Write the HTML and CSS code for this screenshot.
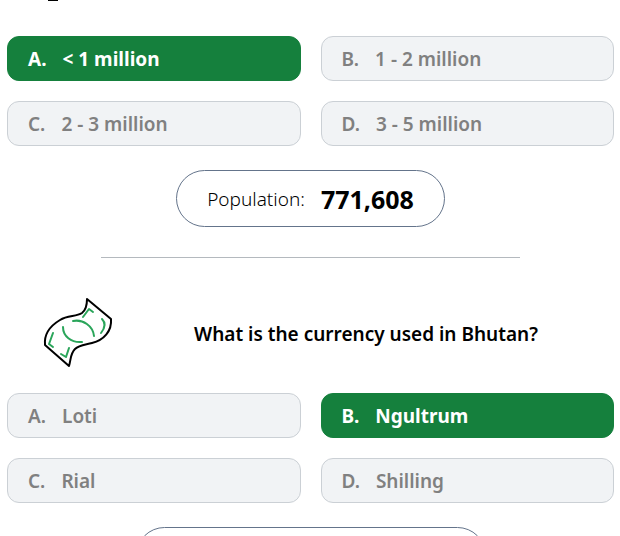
FILE: index.html
```html
<!DOCTYPE html>
<html lang="en">
<head>
  <meta charset="UTF-8">
  <meta name="viewport" content="width=device-width, initial-scale=1.0">
  <title>Bhutan</title>
  <link rel="stylesheet" href="styles.css">
</head>
<body>
  <main class="quiz">

    <section class="question">
      <div class="previous">
        <svg class="people-icon" viewBox="0 0 72 2" aria-hidden="true">
          <path d="M6 0h10v1H6z" fill="#000"/>
        </svg>
      </div>
      <div class="answers">
        <button class="answer correct" type="button"><span>A.</span><span>&lt; 1 million</span></button>
        <button class="answer" type="button" disabled><span>B.</span><span>1 - 2 million</span></button>
        <button class="answer" type="button" disabled><span>C.</span><span>2 - 3 million</span></button>
        <button class="answer" type="button" disabled><span>D.</span><span>3 - 5 million</span></button>
      </div>
      <p class="result"><span>Population:</span><strong>771,608</strong></p>
    </section>

    <hr class="divider">

    <section class="question">
      <div class="prompt">
        <svg class="money-icon" viewBox="0 0 72 72" fill="none" stroke-linecap="round" stroke-linejoin="round" aria-hidden="true">
          <path d="M45 2L69 22C70 34 62 43 50 46C42 48 37 48 33 52C28 57 29 63 27 69L3 48C2 38 8 29 18 23C26 18 34 20 40 16C44 13 45 8 45 2Z" stroke="#000" stroke-width="2"/>
          <path d="M41 20L47 12L51 15M60 22C64 26 63 31 59 36M11 36L7 47L11 50M19 57L24 60L27 51M31 24C41 22 51 29 52 39M21 30C21 39 29 46 40 45" stroke="#2aa55a" stroke-width="2"/>
        </svg>
        <h2>What is the currency used in Bhutan?</h2>
      </div>
      <div class="answers">
        <button class="answer" type="button" disabled><span>A.</span><span>Loti</span></button>
        <button class="answer correct" type="button"><span>B.</span><span>Ngultrum</span></button>
        <button class="answer" type="button" disabled><span>C.</span><span>Rial</span></button>
        <button class="answer" type="button" disabled><span>D.</span><span>Shilling</span></button>
      </div>
      <div class="result result-wide"></div>
    </section>

  </main>
</body>
</html>
```
FILE: styles.css
```css
* {
  box-sizing: border-box;
}

html {
  overflow: hidden;
}

body {
  margin: 0;
  height: 100vh;
  overflow: hidden;
  background: #fff;
  color: #000;
  font-family: "Noto Sans", "Open Sans", sans-serif;
}

.quiz {
  padding: 0 6px 0 7px;
}

.question {
  display: flex;
  flex-direction: column;
}

.previous {
  height: 36px;
  padding-left: 35px;
}

.people-icon {
  display: block;
  width: 72px;
}

.answers {
  display: grid;
  grid-template-columns: 1fr 1fr;
  gap: 20px;
}

.answer {
  display: flex;
  align-items: center;
  gap: 16px;
  padding: 10px 20px 8px;
  border: 1px solid #cbd0d5;
  border-radius: 12px;
  background: #f1f3f5;
  color: #808080;
  font-family: inherit;
  font-size: 19px;
  font-weight: 600;
  line-height: 25px;
  text-align: left;
}

.answer.correct {
  border-color: #15803d;
  background: #15803d;
  color: #fff;
  font-weight: 700;
}

.result {
  display: flex;
  align-items: center;
  align-self: center;
  gap: 16px;
  height: 57px;
  margin: 24px 0 0;
  padding: 0 30px;
  border: 1px solid #64748b;
  border-radius: 29px;
  font-size: 19px;
  font-weight: 300;
}

.result strong {
  font-size: 25px;
  font-weight: 700;
}

.result-wide {
  width: 350px;
}

.divider {
  width: 69%;
  margin: 30px auto;
  border: 0;
  border-top: 1px solid #b4b9be;
}

.prompt {
  display: flex;
  align-items: center;
  gap: 4px;
  margin: 9px 0 24px;
  padding-left: 35px;
}

.prompt h2 {
  flex: 1;
  margin: 0;
  padding-top: 2px;
  font-size: 19px;
  font-weight: 600;
  text-align: center;
}

.money-icon {
  width: 72px;
  height: 72px;
}
```
